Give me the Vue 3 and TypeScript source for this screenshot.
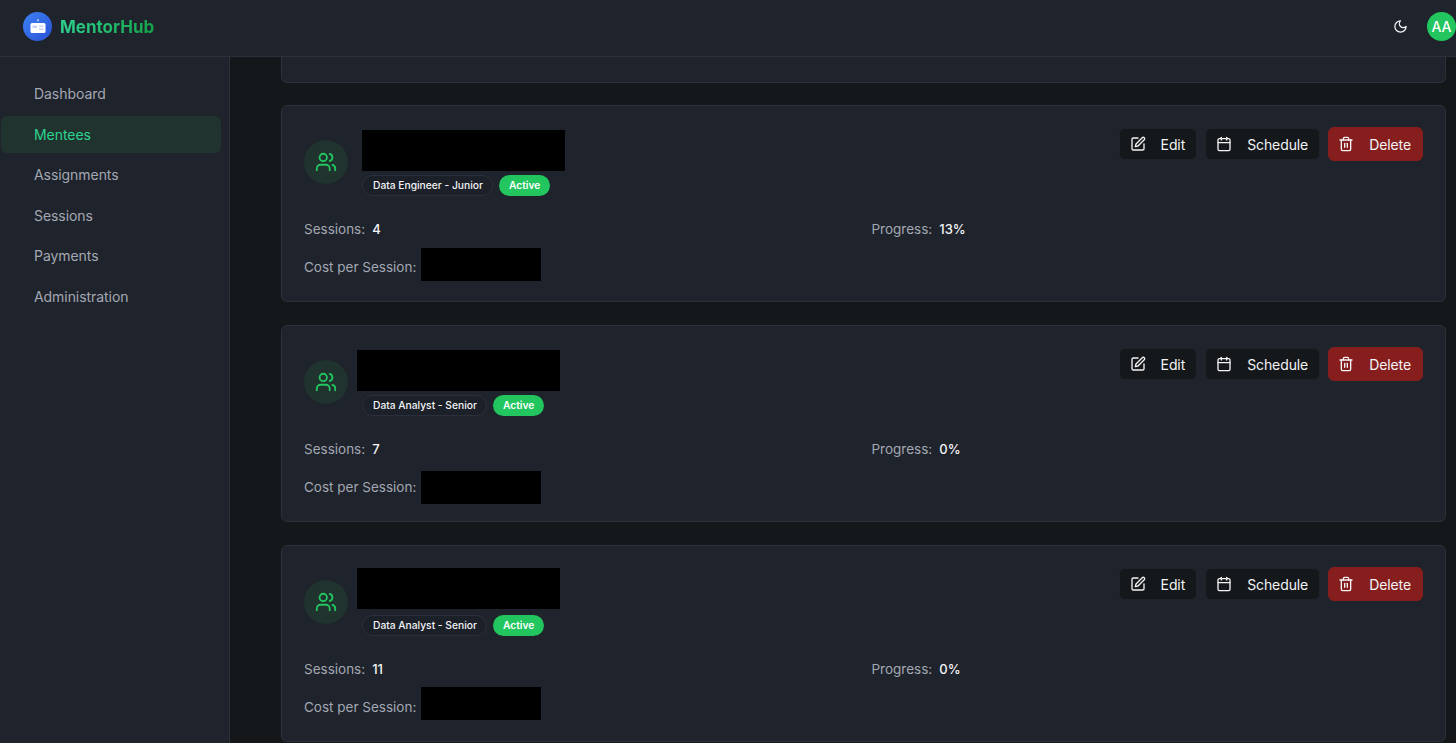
<script setup lang="ts">
interface Mentee {
  role: string;
  sessions: number;
  progress: string;
  nameX: number;
  nameY: number;
  costY: number;
}

const navItems = ["Dashboard", "Mentees", "Assignments", "Sessions", "Payments", "Administration"];

// name and cost are blacked out in the source, and the boxes do not sit quite the same on each card
const mentees: Mentee[] = [
  { role: "Data Engineer - Junior", sessions: 4, progress: "13%", nameX: 0, nameY: 2, costY: -3 },
  { role: "Data Analyst - Senior", sessions: 7, progress: "0%", nameX: -5, nameY: 2, costY: 0 },
  { role: "Data Analyst - Senior", sessions: 11, progress: "0%", nameX: -5, nameY: 0, costY: -4 }
];
</script>

<template>
  <div class="app">
    <header class="topbar">
      <div class="brand">
        <span class="logo">
          <svg width="18" height="16" viewBox="0 0 18 16">
            <path d="M8 0.5h2l-1 2.4z" fill="#fff" />
            <rect x="1.5" y="4" width="15" height="10" rx="1.5" fill="#fff" />
            <rect x="3.5" y="6.5" width="4.5" height="2.5" fill="#c4d4f8" />
            <rect x="10" y="6.5" width="4.5" height="1.5" fill="#c4d4f8" />
            <rect x="10" y="9.5" width="4.5" height="1.5" fill="#c4d4f8" />
          </svg>
        </span>
        <span class="brand-name">MentorHub</span>
      </div>
      <div class="topbar-right">
        <svg class="moon" width="15" height="15" viewBox="0 0 24 24" fill="none" stroke="currentColor" stroke-width="2" stroke-linecap="round" stroke-linejoin="round">
          <path d="M12 3a6 6 0 0 0 9 9 9 9 0 1 1-9-9Z" />
        </svg>
        <span class="user">AA</span>
      </div>
    </header>

    <div class="body">
      <nav class="sidebar">
        <a v-for="item in navItems" :key="item" class="nav-item" :class="{ active: item === 'Mentees' }">{{ item }}</a>
      </nav>

      <main class="main">
        <div class="card-stub"></div>

        <section v-for="(m, i) in mentees" :key="i" class="card">
          <div class="card-head">
            <div class="person">
              <span class="avatar">
                <svg width="22" height="22" viewBox="0 0 24 24" fill="none" stroke="currentColor" stroke-width="2" stroke-linecap="round" stroke-linejoin="round">
                  <path d="M16 21v-2a4 4 0 0 0-4-4H6a4 4 0 0 0-4 4v2" />
                  <circle cx="9" cy="7" r="4" />
                  <path d="M22 21v-2a4 4 0 0 0-3-3.87" />
                  <path d="M16 3.13a4 4 0 0 1 0 7.75" />
                </svg>
              </span>
              <div class="info">
                <div class="name-slot">
                  <div class="redact name" :style="{ transform: `translate(${m.nameX}px, ${m.nameY}px)` }"></div>
                </div>
                <div class="chips">
                  <span class="chip">{{ m.role }}</span>
                  <span class="status">Active</span>
                </div>
              </div>
            </div>
            <div class="actions">
              <button class="btn">
                <svg width="16" height="16" viewBox="0 0 24 24" fill="none" stroke="currentColor" stroke-width="2" stroke-linecap="round" stroke-linejoin="round">
                  <path d="M12 3H5a2 2 0 0 0-2 2v14a2 2 0 0 0 2 2h14a2 2 0 0 0 2-2v-7" />
                  <path d="M18.4 2.6a2.1 2.1 0 0 1 3 3L12 15l-4 1 1-4Z" />
                </svg>
                Edit
              </button>
              <button class="btn">
                <svg width="16" height="16" viewBox="0 0 24 24" fill="none" stroke="currentColor" stroke-width="2" stroke-linecap="round" stroke-linejoin="round">
                  <path d="M8 2v4" />
                  <path d="M16 2v4" />
                  <rect x="3" y="4" width="18" height="18" rx="2" />
                  <path d="M3 10h18" />
                </svg>
                Schedule
              </button>
              <button class="btn danger">
                <svg width="16" height="16" viewBox="0 0 24 24" fill="none" stroke="currentColor" stroke-width="2" stroke-linecap="round" stroke-linejoin="round">
                  <path d="M3 6h18" />
                  <path d="M19 6v14a2 2 0 0 1-2 2H7a2 2 0 0 1-2-2V6" />
                  <path d="M8 6V4a2 2 0 0 1 2-2h4a2 2 0 0 1 2 2v2" />
                  <path d="M10 11v6" />
                  <path d="M14 11v6" />
                </svg>
                Delete
              </button>
            </div>
          </div>

          <div class="stats">
            <div class="stat"><span class="label">Sessions:</span><span class="value">{{ m.sessions }}</span></div>
            <div class="stat"><span class="label">Progress:</span><span class="value">{{ m.progress }}</span></div>
            <div class="stat">
              <span class="label">Cost per Session:</span>
              <span class="redact cost" :style="{ transform: `translateY(${m.costY}px)` }"></span>
            </div>
          </div>
        </section>
      </main>
    </div>
  </div>
</template>

<style>
html,
body {
  margin: 0;
  background: #14181b;
}
</style>

<style scoped>
.app {
  height: 743px;
  overflow: hidden;
  font-family: Inter, "Liberation Sans", sans-serif;
  font-size: 14px;
  color: #f3f4f6;
  display: flex;
  flex-direction: column;
}
.topbar {
  height: 57px;
  box-sizing: border-box;
  flex: none;
  background: #1f232c;
  border-bottom: 1px solid #2b303a;
  display: flex;
  align-items: center;
  justify-content: space-between;
  padding: 0 0 3px 23px;
}
.brand {
  display: flex;
  align-items: center;
  gap: 8px;
}
.logo {
  width: 29px;
  height: 29px;
  border-radius: 50%;
  background: linear-gradient(135deg, #3b82f6, #2b50d4);
  display: flex;
  align-items: center;
  justify-content: center;
}
.brand-name {
  font-size: 17px;
  font-weight: 700;
  background: linear-gradient(90deg, #2dd48f, #16a34a);
  -webkit-background-clip: text;
  background-clip: text;
  color: transparent;
}
.topbar-right {
  display: flex;
  align-items: center;
  gap: 19px;
}
.moon {
  color: #f3f4f6;
}
.user {
  width: 29px;
  height: 29px;
  border-radius: 50%;
  background: #22c55e;
  color: #fff;
  font-size: 14px;
  font-weight: 500;
  display: flex;
  align-items: center;
  justify-content: center;
}
.body {
  flex: 1;
  display: flex;
  min-height: 0;
}
.sidebar {
  flex: none;
  background: #1f232c;
  border-right: 1px solid #2b303a;
  padding: 18px 8px 0 1px;
  width: 220px;
  display: flex;
  flex-direction: column;
  gap: 3.5px;
}
.nav-item {
  height: 37px;
  line-height: 37px;
  padding-left: 33px;
  border-radius: 6px;
  color: #a3a8b3;
  letter-spacing: -0.06px;
}
.nav-item.active {
  background: #20332f;
  color: #2dd48f;
}
.main {
  flex: 1;
  padding: 0 10px 0 51px;
  display: flex;
  flex-direction: column;
  gap: 23px;
}
.card-stub {
  height: 26px;
  margin-bottom: -1px;
  flex: none;
  box-sizing: border-box;
  background: #1f232c;
  border: 1px solid #2b303a;
  border-top: none;
  border-radius: 0 0 6px 6px;
}
.card {
  flex: none;
  height: 197px;
  box-sizing: border-box;
  background: #1f232c;
  border: 1px solid #2b303a;
  border-radius: 6px;
  padding: 22px;
}
.card-head {
  display: flex;
  justify-content: space-between;
  align-items: flex-start;
}
.person {
  display: flex;
  align-items: center;
  gap: 14px;
}
.avatar {
  width: 44px;
  height: 44px;
  border-radius: 50%;
  background: #20332f;
  color: #22c55e;
  display: flex;
  align-items: center;
  justify-content: center;
}
.name-slot {
  height: 47px;
}
.redact {
  background: #000;
}
.name {
  width: 203px;
  height: 41px;
}
.chips {
  display: flex;
  align-items: center;
  gap: 6px;
}
.chip {
  height: 21px;
  box-sizing: border-box;
  line-height: 19px;
  padding: 0 9px 0 10px;
  border: 1px solid #2b303a;
  border-radius: 11px;
  background: #1c2028;
  font-size: 10.25px;
  font-weight: 500;
  color: #f3f4f6;
}
.status {
  height: 21px;
  line-height: 21px;
  padding: 0 10px;
  border-radius: 11px;
  background: #22c55e;
  color: #fff;
  font-size: 10.25px;
  font-weight: 600;
}
.actions {
  display: flex;
  align-items: center;
  gap: 8px;
  margin-top: -1px;
}
.btn {
  height: 32px;
  display: flex;
  align-items: center;
  gap: 15px;
  padding: 0 11px 0 10px;
  background: #14181b;
  border: 1px solid #1f232c;
  border-radius: 6px;
  color: #f3f4f6;
  font: inherit;
  letter-spacing: -0.1px;
}
.btn.danger {
  height: 34px;
  padding-left: 9px;
  background: #861e1e;
  border-color: #861e1e;
}
.stats {
  display: grid;
  grid-template-columns: 1fr 1fr;
  gap: 18px 16px;
  margin-top: 23px;
}
.stat {
  display: flex;
  align-items: center;
  height: 20px;
  gap: 7px;
}
.label {
  color: #a3a8b3;
  font-size: 13.5px;
}
.value {
  color: #f3f4f6;
  font-size: 13px;
  font-weight: 500;
}
.cost {
  width: 120px;
  height: 33px;
  flex: none;
  margin-left: -2px;
}
</style>
